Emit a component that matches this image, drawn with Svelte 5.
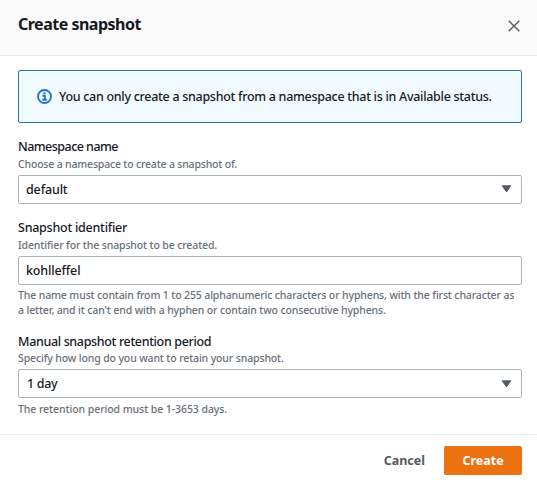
<script lang="ts">
  interface Field {
    id: string;
    kind: 'select' | 'input';
    label: string;
    description: string;
    value: string;
    constraint?: string[];
  }

  let fields: Field[] = $state([
    {
      id: 'namespace',
      kind: 'select',
      label: 'Namespace name',
      description: 'Choose a namespace to create a snapshot of.',
      value: 'default',
    },
    {
      id: 'identifier',
      kind: 'input',
      label: 'Snapshot identifier',
      description: 'Identifier for the snapshot to be created.',
      value: 'kohlleffel',
      constraint: [
        'The name must contain from 1 to 255 alphanumeric characters or hyphens, with the first character as',
        "a letter, and it can't end with a hyphen or contain two consecutive hyphens.",
      ],
    },
    {
      id: 'retention',
      kind: 'select',
      label: 'Manual snapshot retention period',
      description: 'Specify how long do you want to retain your snapshot.',
      value: '1 day',
      constraint: ['The retention period must be 1-3653 days.'],
    },
  ]);
</script>

<div class="modal" role="dialog" aria-labelledby="modal-title">
  <header class="modal-header">
    <h2 id="modal-title"><span>Create snapshot</span></h2>
    <button type="button" class="close" aria-label="Close">
      <svg width="12" height="12" viewBox="0 0 12 12">
        <path d="M0.7 0.7 11.3 11.3M11.3 0.7 0.7 11.3" />
      </svg>
    </button>
  </header>

  <div class="modal-body">
    <div class="alert">
      <svg class="info" width="15" height="15" viewBox="0 0 15 15">
        <circle cx="7.5" cy="7.5" r="6.5" />
        <path d="M5.5 6.7H7.8V10.6M5.3 10.7H9.9" />
        <path class="dot" d="M6.3 3.4H8.6V5.2H6.3Z" />
      </svg>
      <span>You can only create a snapshot from a namespace that is in Available status.</span>
    </div>

    {#each fields as field (field.id)}
      <div class="field {field.id}">
        <label for={field.id}><span>{field.label}</span></label>
        <div class="description"><span>{field.description}</span></div>
        {#if field.kind === 'select'}
          <button type="button" class="control" id={field.id}>
            <span>{field.value}</span>
            <svg width="11" height="8" viewBox="0 0 11 8">
              <path d="M1.2 0.8H9.8L5.5 6.9Z" />
            </svg>
          </button>
        {:else}
          <input class="control" id={field.id} type="text" spellcheck="false" bind:value={field.value} />
        {/if}
        {#if field.constraint}
          <div class="constraint">
            {#each field.constraint as line}
              <div><span>{line}</span></div>
            {/each}
          </div>
        {/if}
      </div>
    {/each}
  </div>

  <footer class="modal-footer">
    <button type="button" class="cancel">Cancel</button>
    <button type="button" class="create">Create</button>
  </footer>
</div>

<style>
  :global(body) {
    background: #fff;
  }

  .modal {
    display: flex;
    flex-direction: column;
    box-sizing: border-box;
    height: 483px;
    color: #16191f;
    font-family: 'Noto Sans', sans-serif;
    font-size: 12.5px;
    font-weight: 500;
    white-space: nowrap;
  }

  button,
  input {
    font: inherit;
    color: inherit;
  }

  .modal-header {
    display: flex;
    align-items: center;
    justify-content: space-between;
    box-sizing: border-box;
    height: 56px;
    padding: 0 17px 7px 18px;
    background: #fafafa;
    border-bottom: 1px solid #eaeded;
  }

  h2 {
    margin: 0;
    font-size: 16px;
    font-weight: 700;
    line-height: 22px;
    letter-spacing: -0.5px;
  }

  .close {
    display: flex;
    padding: 4px 0 0;
    border: 0;
    background: none;
  }

  .close path {
    fill: none;
    stroke: #545b64;
    stroke-width: 1.4;
  }

  .modal-body {
    flex: 1;
    padding: 14px 15px 0 18px;
  }

  .alert {
    display: flex;
    align-items: center;
    gap: 7px;
    box-sizing: border-box;
    height: 53px;
    margin-bottom: 15px;
    padding-left: 18px;
    background: #f1faff;
    border: 1px solid #2074bb;
    border-radius: 2px;
    letter-spacing: -0.29px;
  }

  .info circle,
  .info path {
    fill: none;
    stroke: #2074c4;
    stroke-width: 1.9;
  }

  .info .dot {
    fill: #2074c4;
    stroke: none;
  }

  .field {
    margin-bottom: 15px;
  }

  label {
    display: block;
    line-height: 18px;
    letter-spacing: -0.35px;
  }

  .namespace label {
    letter-spacing: -0.53px;
  }

  .identifier label {
    letter-spacing: -0.25px;
  }

  .description {
    height: 16px;
    margin-bottom: 3px;
    line-height: 16px;
  }

  .retention .description {
    height: 15px;
    line-height: 15px;
  }

  .description,
  .constraint {
    color: #687078;
    font-size: 10.5px;
    letter-spacing: -0.13px;
  }

  .namespace .description {
    letter-spacing: -0.18px;
  }

  .constraint {
    padding-top: 3px;
    line-height: 15px;
  }

  .retention .constraint {
    padding-top: 4px;
    letter-spacing: -0.07px;
  }

  .control {
    display: flex;
    align-items: center;
    justify-content: space-between;
    box-sizing: border-box;
    width: 100%;
    height: 29px;
    padding: 0 9px 1px 7px;
    background: #fff;
    border: 1px solid #aab7b8;
    border-radius: 2px;
    letter-spacing: -0.15px;
  }

  .retention .control {
    padding: 0 9px 0 8px;
    letter-spacing: -0.3px;
  }

  .control path {
    fill: #545b64;
    stroke: #545b64;
    stroke-linejoin: round;
  }

  .modal-footer {
    display: flex;
    align-items: center;
    justify-content: flex-end;
    box-sizing: border-box;
    height: 49px;
    padding: 3px 15px 0 0;
    border-top: 1px solid #eaeded;
    font-weight: 700;
    letter-spacing: -0.1px;
  }

  .modal-footer button {
    height: 29px;
    padding: 0 19px;
    border: 0;
    border-radius: 2px;
  }

  .cancel {
    background: none;
    color: #545b64;
  }

  .modal-footer .create {
    width: 78px;
    padding: 0;
    background: #ec7211;
    color: #fff;
  }
</style>
